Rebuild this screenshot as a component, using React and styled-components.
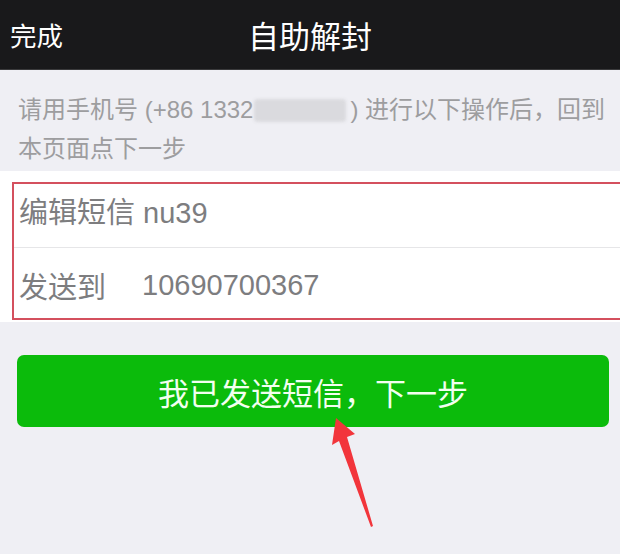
import React from "react";
import styled, { createGlobalStyle } from "styled-components";

const GlobalStyle = createGlobalStyle`
  html, body {
    margin: 0;
    padding: 0;
    background: #efeff4;
  }
  body {
    font-family: "Liberation Sans", "Noto Sans CJK SC", sans-serif;
    -webkit-font-smoothing: antialiased;
  }
`;

const Page = styled.div`
  position: relative;
  width: 620px;
  height: 554px;
  overflow: hidden;
  background: #efeff4;
`;

const NavBar = styled.header`
  height: 70px;
  background: #19191b;
  display: grid;
  grid-template-columns: 1fr auto 1fr;
  align-items: center;
  color: #fff;
  border-bottom: 1px solid #3a3a3c;
  box-sizing: border-box;
`;

const NavAction = styled.span`
  padding-left: 10px;
  font-size: 26.5px;
`;

const NavTitle = styled.h1`
  margin: 0;
  font-size: 31px;
  font-weight: 400;
`;

const Tip = styled.p`
  margin: 0;
  padding: 20px 10px 0 18px;
  font-size: 24px;
  line-height: 39px;
  color: #9d9d9f;
`;

const Redacted = styled.span`
  display: inline-block;
  width: 92px;
  height: 23px;
  margin: 0 4px -4px 1px;
  background: #dadade;
  border-radius: 4px;
  filter: blur(1.5px);
`;

const FormSection = styled.section`
  margin-top: 3px;
  padding: 11px 0 2px 12px;
  background: #fff;
`;

const Highlight = styled.div`
  border: 2px solid #d4505e;
  border-right: none;
`;

const Row = styled.div`
  display: grid;
  grid-template-columns: 110px 1fr;
  align-items: center;
  height: ${(p) => p.$height}px;
  padding: ${(p) => p.$pad};
  box-sizing: border-box;
  font-size: 29px;
  color: #7d7d7f;
  border-bottom: ${(p) => (p.$divider ? "1px solid #e6e6e8" : "none")};
`;

const Label = styled.span`
  white-space: nowrap;
`;

const Value = styled.span`
  padding-left: 13px;
`;

const Actions = styled.div`
  padding: 33px 11px 0 17px;
`;

const PrimaryButton = styled.button`
  width: 100%;
  height: 72px;
  border: 0;
  border-radius: 7px;
  background: #0bbb0b;
  color: #f2fff0;
  font-family: inherit;
  font-size: 31px;
  cursor: pointer;
`;

const Arrow = styled.svg`
  position: absolute;
  left: 0;
  top: 0;
  pointer-events: none;
`;

export default function App() {
  return (
    <Page>
      <GlobalStyle />
      <NavBar>
        <NavAction>完成</NavAction>
        <NavTitle>自助解封</NavTitle>
        <span />
      </NavBar>

      <Tip>
        <span>请用手机号 (+86 1332</span>
        <Redacted />
        <span>) 进行以下操作后，回到</span>
        <br />
        <span>本页面点下一步</span>
      </Tip>

      <FormSection>
        <Highlight>
          <Row $height={64} $pad="0 0 12px 5px" $divider>
            <Label>编辑短信 nu39</Label>
            <span />
          </Row>
          <Row $height={70} $pad="4px 0 0 5px">
            <Label>发送到</Label>
            <Value>10690700367</Value>
          </Row>
        </Highlight>
      </FormSection>

      <Actions>
        <PrimaryButton>我已发送短信，下一步</PrimaryButton>
      </Actions>

      <Arrow width="620" height="554" viewBox="0 0 620 554">
        <polygon
          points="336,418 355,434 347,437 373,526 371,527 339,441 332,445"
          fill="#f2353b"
        />
      </Arrow>
    </Page>
  );
}
